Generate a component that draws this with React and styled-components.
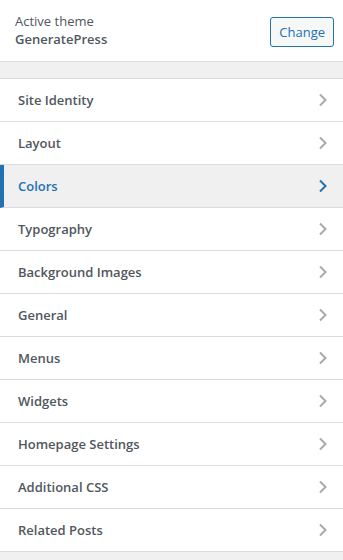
import React from 'react';
import styled, { createGlobalStyle } from 'styled-components';

const GlobalStyle = createGlobalStyle`
  body {
    margin: 0;
    background: #f0f0f1;
    font-family: "Open Sans", "Noto Sans", sans-serif;
  }
`;

const Panel = styled.div`
  width: 343px;
  height: 560px;
  background: #f0f0f1;
  overflow: hidden;
`;

const ThemeBar = styled.div`
  display: flex;
  align-items: center;
  justify-content: space-between;
  height: 62px;
  padding: 0 9px 0 15px;
  background: #fff;
  border-bottom: 1px solid #dcdcde;
  box-sizing: border-box;
`;

const ThemeInfo = styled.div`
  display: flex;
  flex-direction: column;
  color: #50575e;
  margin-top: -1px;
`;

const ThemeLabel = styled.span`
  font-size: 13px;
  line-height: 18px;
`;

const ThemeName = styled.span`
  font-size: 13px;
  font-weight: 600;
  line-height: 19px;
`;

const ChangeButton = styled.button`
  height: 30px;
  padding: 0 8px;
  font-family: inherit;
  font-size: 13px;
  color: #2271b1;
  background: #f6f7f7;
  border: 1px solid #2271b1;
  border-radius: 3px;
  margin-top: 3px;
`;

const Section = styled.ul`
  list-style: none;
  margin: 16px 0 0;
  padding: 0;
  border-top: 1px solid #dcdcde;
`;

const Item = styled.li`
  display: flex;
  align-items: center;
  justify-content: space-between;
  height: 42px;
  padding: 0 14px 0 ${p => (p.$active ? '14px' : '18px')};
  background: ${p => (p.$active ? '#f0f0f1' : '#fff')};
  border-left: ${p => (p.$active ? '4px solid #2271b1' : 'none')};
  border-bottom: 1px solid #dcdcde;
  color: ${p => (p.$active ? '#2271b1' : '#50575e')};
  font-size: 13px;
  font-weight: 600;
`;

const Chevron = ({ color }) => (
  <svg width="12" height="14" viewBox="0 0 12 14">
    <path d="M3 1.5 L8.5 7 L3 12.5" fill="none" stroke={color} strokeWidth="2" />
  </svg>
);

const items = [
  'Site Identity',
  'Layout',
  'Colors',
  'Typography',
  'Background Images',
  'General',
  'Menus',
  'Widgets',
  'Homepage Settings',
  'Additional CSS',
  'Related Posts',
];

export default function App() {
  return (
    <Panel>
      <GlobalStyle />
      <ThemeBar>
        <ThemeInfo>
          <ThemeLabel>Active theme</ThemeLabel>
          <ThemeName>GeneratePress</ThemeName>
        </ThemeInfo>
        <ChangeButton>Change</ChangeButton>
      </ThemeBar>
      <Section>
        {items.map(name => {
          const active = name === 'Colors';
          return (
            <Item key={name} $active={active}>
              {name}
              <Chevron color={active ? '#2271b1' : '#a7aaad'} />
            </Item>
          );
        })}
      </Section>
    </Panel>
  );
}
